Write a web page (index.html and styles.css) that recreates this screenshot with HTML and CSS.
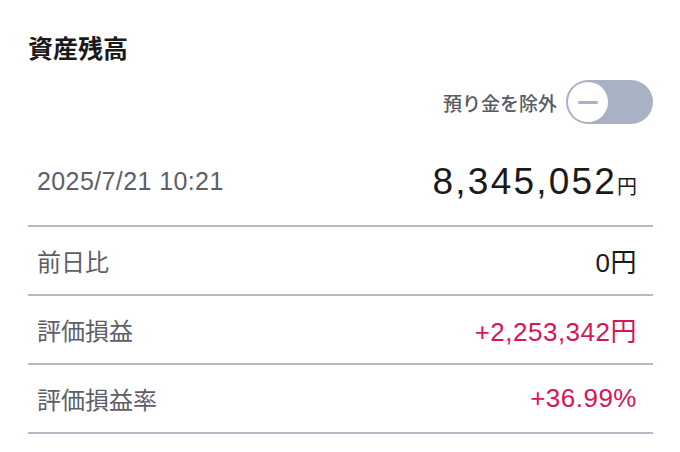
FILE: index.html
```html
<!DOCTYPE html>
<html lang="ja">
<head>
    <meta charset="UTF-8">
    <meta name="viewport" content="width=device-width, initial-scale=1.0">
    <title>資産残高</title>
    <link rel="stylesheet" href="styles.css">
</head>
<body>
    <div class="balance">
        <h1 class="balance-title">資産残高</h1>

        <div class="toggle-row">
            <span class="toggle-label">預り金を除外</span>
            <span class="toggle">
                <span class="toggle-knob"><span class="toggle-minus"></span></span>
            </span>
        </div>

        <div class="summary">
            <span class="summary-date">2025/7/21 10:21</span>
            <span class="summary-total">8,345,052<span class="yen-small">円</span></span>
        </div>

        <div class="row">
            <span class="row-label">前日比</span>
            <span class="row-value">0円</span>
        </div>
        <div class="row">
            <span class="row-label">評価損益</span>
            <span class="row-value plus">+2,253,342円</span>
        </div>
        <div class="row">
            <span class="row-label">評価損益率</span>
            <span class="row-value plus">+36.99%</span>
        </div>
    </div>
</body>
</html>
```

FILE: styles.css
```css
body {
    margin: 0;
    background-color: #fff;
    font-family: "Liberation Sans", "Noto Sans CJK JP", sans-serif;
    color: #1a1a1a;
}
.balance {
    padding: 30px 27px 0 28px;
}
.balance-title {
    margin: 0;
    font-family: "Noto Sans CJK JP", sans-serif;
    font-size: 25px;
    font-weight: 700;
    line-height: 34px;
    color: #1a1a1a;
}
.toggle-row {
    margin-top: 16px;
    display: flex;
    justify-content: flex-end;
    align-items: center;
    gap: 9px;
}
.toggle-label {
    font-family: "Noto Sans CJK JP", sans-serif;
    font-size: 19px;
    font-weight: 500;
    color: #565a62;
}
.toggle {
    width: 87px;
    height: 44px;
    border-radius: 22px;
    background-color: #a9b1c5;
    display: flex;
    align-items: center;
    padding: 0 2px;
    box-sizing: border-box;
}
.toggle-knob {
    width: 40px;
    height: 40px;
    border-radius: 50%;
    background-color: #fff;
    display: flex;
    align-items: center;
    justify-content: center;
}
.toggle-minus {
    width: 20px;
    height: 3px;
    border-radius: 2px;
    background-color: #a9b1c5;
}
.summary {
    margin-top: 14px;
    height: 89px;
    box-sizing: border-box;
    border-bottom: 2px solid #b4b9c5;
    display: flex;
    justify-content: space-between;
    align-items: center;
    padding: 0 16px 0 9px;
}
.summary-date {
    font-size: 25px;
    letter-spacing: 0.4px;
    color: #5d6068;
}
.summary-total {
    font-size: 37px;
    letter-spacing: 2.2px;
    color: #1a1a1a;
}
.yen-small {
    font-family: "Noto Sans CJK JP", sans-serif;
    font-size: 20px;
    letter-spacing: 0;
}
.row {
    height: 69px;
    box-sizing: border-box;
    border-bottom: 2px solid #b4b9c5;
    display: flex;
    justify-content: space-between;
    align-items: center;
    padding: 0 16px 0 9px;
}
.row-label {
    font-family: "Noto Sans CJK JP", sans-serif;
    font-size: 24px;
    color: #5d6068;
}
.row-value {
    font-size: 26px;
    letter-spacing: 0.5px;
    color: #1a1a1a;
}
.row-value.plus {
    color: #d6155a;
}
```
